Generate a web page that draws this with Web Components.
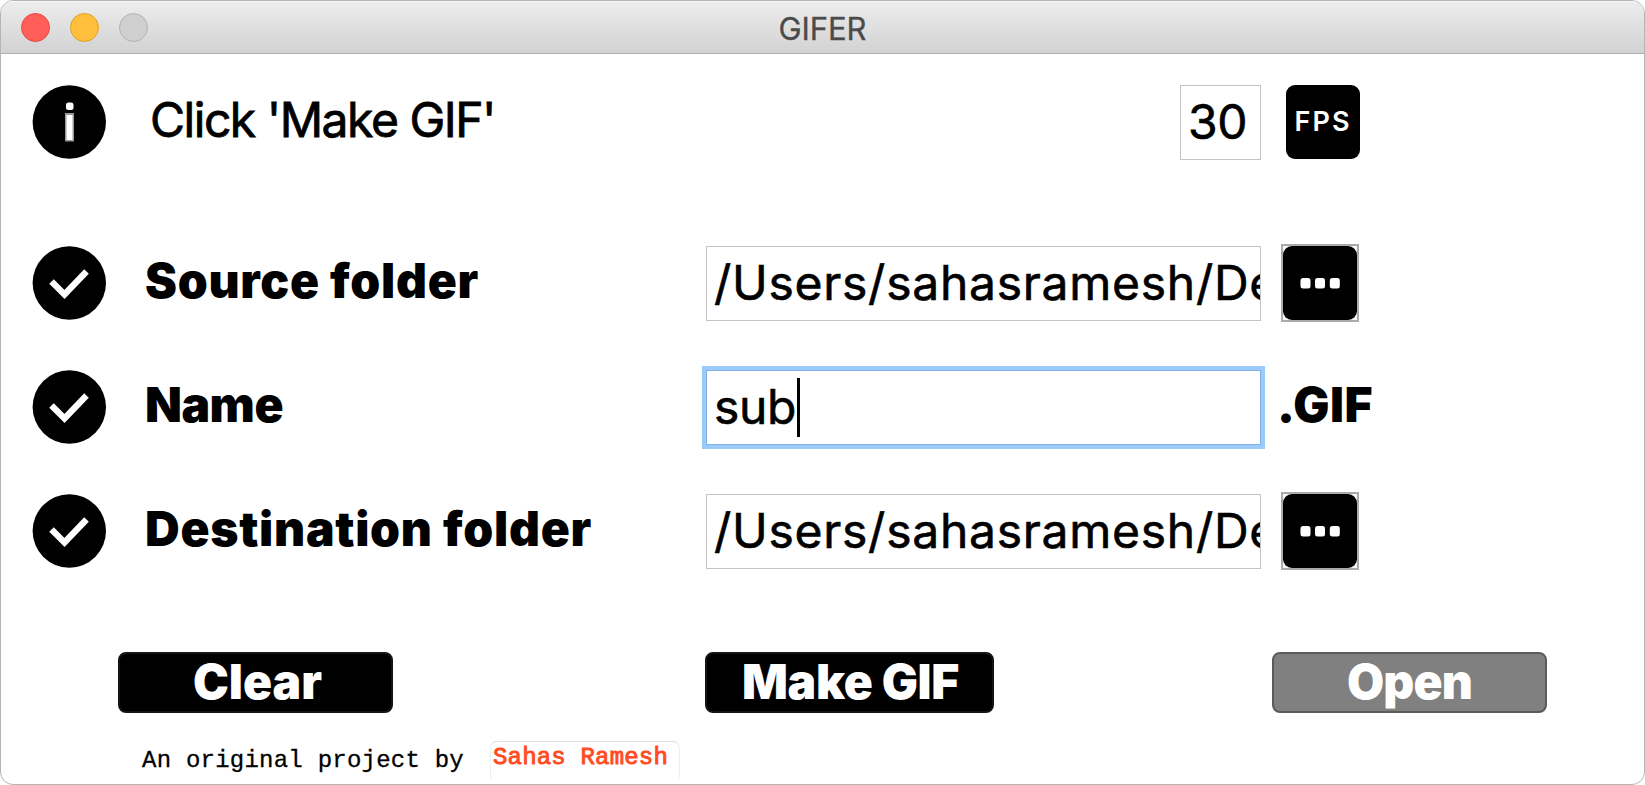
<!DOCTYPE html>
<html lang="en"><head><meta charset="utf-8"><title>GIFER</title>
<style>html,body{margin:0;height:100%;overflow:hidden;background:#fff}</style></head>
<body>
<gifer-window></gifer-window>
<script>
const define = (name, html, setup) => customElements.define(name, class extends HTMLElement {
  connectedCallback() {
    if (this.shadowRoot) return;
    const t = document.createElement('template');
    t.innerHTML = html;
    this.attachShadow({mode: 'open'}).append(t.content.cloneNode(true));
    if (setup) setup(this, this.shadowRoot);
  }
});

/* A one-line label whose tracking is spread over the width it is given. */
define('fit-label', `<style>
:host{display:block;white-space:pre;flex:none}
span{display:inline-block;white-space:pre}
</style><span><slot></slot></span>`, (el, root) => {
  const span = root.querySelector('span');
  const n = el.textContent.length;
  const want = +el.getAttribute('width');
  const have = span.getBoundingClientRect().width;
  if (want && n) span.style.letterSpacing = ((want - have) / n) + 'px';
});

define('traffic-lights', `<style>
:host{display:flex;gap:20px}
i{width:29px;height:29px;box-sizing:border-box;border-radius:50%;border:1px solid}
.c{background:#ff5f58;border-color:#e14942}.m{background:#ffbe3c;border-color:#dfa023}.z{background:#cfcfcf;border-color:#b3b3b3}
</style><i class="c"></i><i class="m"></i><i class="z"></i>`);

define('status-icon', `<style>:host{display:block;width:74px;height:74px}svg{display:block}</style>
<svg width="74" height="74" viewBox="0 0 74 74"><circle cx="37.3" cy="37" r="36.7"/><g></g></svg>`, (el, root) => {
  root.querySelector('g').innerHTML = el.getAttribute('kind') === 'info'
    ? '<rect x="34" y="17.5" width="7.500" height="7.5" rx="2.500" fill="#fff"/><rect x="33" y="28" width="9" height="28.500" fill="#999"/><rect x="34.5" y="30" width="6" height="25" fill="#fff"/>'
    : '<path d="M19.500 35.5 L32.500 48.5 L54.500 25.5" fill="none" stroke="#fff" stroke-width="6.4"/>';
});

define('text-box', `<style>
:host{display:flex;box-sizing:border-box;height:75px;border:1px solid #c3c3c3;padding-left:7px;align-items:center;overflow:hidden;background:#fff;
 font:400 48px/56px Inter,sans-serif;-webkit-text-stroke:.6px}
:host([focused]){border-color:#7fb0e4;box-shadow:0 0 0 4px #9bcafb;overflow:visible}
i{display:none;width:2.5px;height:59px;background:#000;margin-left:1px;flex:none}
:host([focused]) i{display:block}
</style><slot></slot><i></i>`);

define('fps-badge', `<style>
:host{display:flex;width:74px;height:74px;border-radius:9px;background:#000;color:#fff;align-items:center;justify-content:center;
 font:600 27px/30px Inter,sans-serif;box-sizing:border-box}
</style><slot></slot>`);

define('browse-button', `<style>
:host{display:block;box-sizing:border-box;width:78px;height:78px;border:2px solid #aaa;background:#f4f4f4}
svg{display:block}
</style><svg width="74" height="74"><rect width="74" height="74" rx="9"/><g fill="#fff"><rect x="17.5" y="32" width="10" height="10.5" rx="2.5"/><rect x="32" y="32" width="10" height="10.5" rx="2.5"/><rect x="46.8" y="32" width="10" height="10.5" rx="2.5"/></g></svg>`);

define('push-button', `<style>
:host{display:flex;box-sizing:border-box;height:61px;border-radius:8px;border:2px solid #151515;background:#000;color:#fff;justify-content:center;
 font:900 48px/56px Inter,sans-serif}
:host([disabled]){background:#808080;border-color:#5b5b5b}
</style><slot></slot>`);

define('form-row', `<style>
:host{display:grid;grid-template-columns:74px 600px 555px 1fr;height:78px;align-items:center}
.label{padding-left:var(--label-x,39px);font:900 48px/56px Inter,sans-serif;margin-top:-4px}
:host([plain]) .label{font-weight:400;-webkit-text-stroke:.8px}
.field{display:grid}
.end{padding-left:var(--end-x,20px)}
</style><slot name="icon"></slot><div class="label"><slot name="label"></slot></div><div class="field"><slot name="field"></slot></div><div class="end"><slot name="end"></slot></div>`);

define('gifer-window', `<style>
:host{display:flex;flex-direction:column;box-sizing:border-box;width:1645px;height:785px;border:1px solid #b5b5b5;border-radius:13px;overflow:hidden;background:#fff;color:#000}
header{display:grid;grid-template-columns:1fr auto 1fr;align-items:center;box-sizing:border-box;height:53px;flex:none;padding-left:20px;padding-right:20px;
 background:linear-gradient(#ededed,#d2d2d2);border-bottom:1px solid #acacac;box-shadow:inset 0 1px #f5f5f5;color:#4b4b4b;font:400 31px/36px Inter,sans-serif}
traffic-lights{margin-left:-.5px}
header fit-label{padding-top:3px;-webkit-text-stroke:.3px}
main{display:flex;flex-direction:column;padding:29px 0 0 31px}
.gap1{margin-top:83px}.gap2{margin-top:46px}
.ext{margin:-4px 0 0 -4px;font:900 48px/56px Inter,sans-serif}
.actions{display:grid;grid-template-columns:275px 312px 289px 278px 275px;margin:82px 0 0 86px}
.actions :nth-child(2){grid-column:3}.actions :nth-child(3){grid-column:5}
footer{display:flex;margin:28px 0 0 110px;font:400 24px/28px "Liberation Mono",monospace;align-items:flex-start}
.by{padding-top:6px;-webkit-text-stroke:.3px}
.who{box-sizing:border-box;width:190px;height:41px;border:1px solid #ddd;border-bottom-color:transparent;border-left-color:#eee;border-right-color:#eee;border-radius:7px;margin-left:26px;padding:2px 0 0 2px;color:#ff4b1f;-webkit-text-stroke:.9px}
</style>
<header><traffic-lights></traffic-lights><fit-label width="88">GIFER</fit-label><span></span></header>
<main>
<form-row plain style="--label-x:44px;--end-x:25px"><status-icon slot="icon" kind="info"></status-icon><fit-label slot="label" width="345">Click 'Make GIF'</fit-label>
<text-box slot="field" style="width:81px;margin-left:474px"><fit-label width="59">30</fit-label></text-box><fps-badge slot="end"><fit-label width="57">FPS</fit-label></fps-badge></form-row>
<form-row class="gap1"><status-icon slot="icon"></status-icon><fit-label slot="label" width="334">Source folder</fit-label>
<text-box slot="field"><fit-label width="564">/Users/sahasramesh/De</fit-label></text-box><browse-button slot="end"></browse-button></form-row>
<form-row class="gap2"><status-icon slot="icon"></status-icon><fit-label slot="label" width="138">Name</fit-label>
<text-box slot="field" focused><fit-label width="82">sub</fit-label></text-box><fit-label class="ext" slot="end" width="96">.GIF</fit-label></form-row>
<form-row class="gap2"><status-icon slot="icon"></status-icon><fit-label slot="label" width="447">Destination folder</fit-label>
<text-box slot="field"><fit-label width="564">/Users/sahasramesh/De</fit-label></text-box><browse-button slot="end"></browse-button></form-row>
<div class="actions"><push-button><fit-label style="margin-left:4px" width="129">Clear</fit-label></push-button><push-button><fit-label style="margin-left:2px" width="217">Make GIF</fit-label></push-button><push-button disabled><fit-label width="125">Open</fit-label></push-button></div>
<footer><div class="by"><fit-label width="322">An original project by</fit-label></div><div class="who"><fit-label width="175">Sahas Ramesh</fit-label></div></footer>
</main>`);
</script>
</body></html>
